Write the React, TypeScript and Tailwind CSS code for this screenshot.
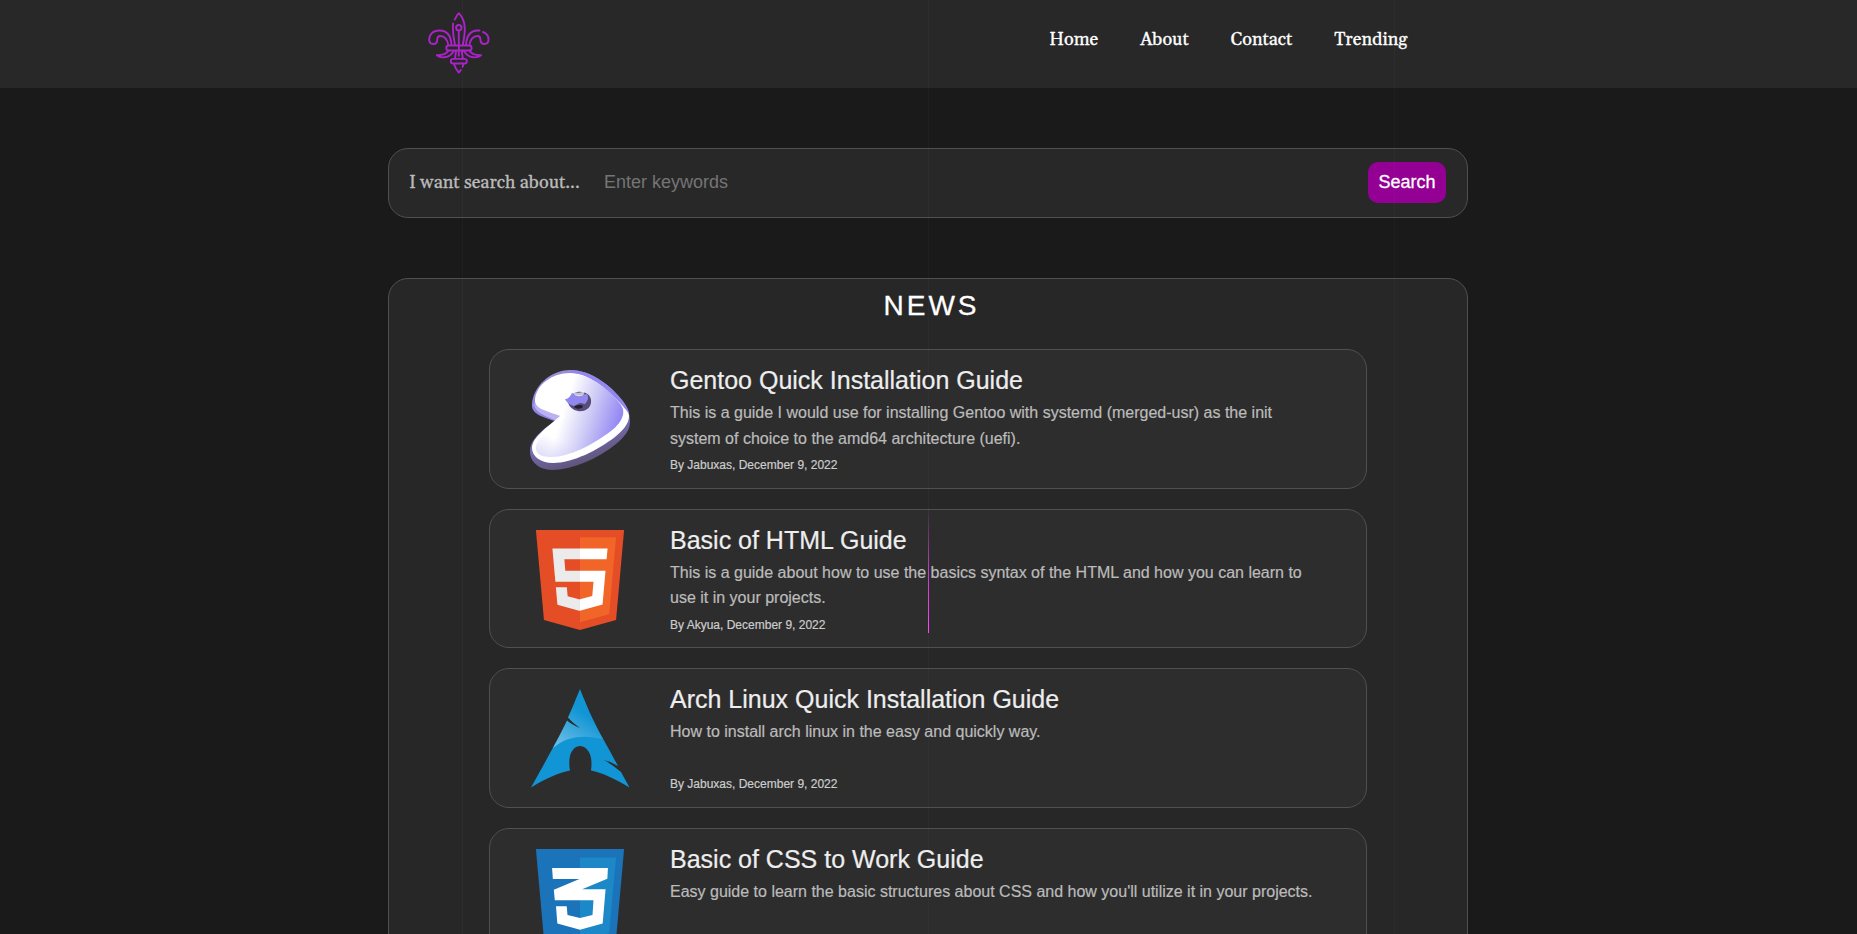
import React from "react";

function Logo() {
  return (
    <svg width="62" height="62" viewBox="0 0 62 62" fill="none" stroke="#ab22c8" strokeWidth="1.9" strokeLinecap="round" strokeLinejoin="round">
      <path d="M26.800 7.500C27.800 5 29 3 30.800 1.200 34.500 5 36.800 11 36.800 17c0 6-1 11-2 16M25 11.500C24.500 18 25.500 26 27 33M30.800 18.800v25" />
      <circle cx="30.800" cy="15.700" r="2.700" />
      <path d="M23.500 33C23 24 19 18.500 11.500 18.500 5 18.500 1.200 22.500 1.200 27.500c0 3 1.500 4.500 4 4.500s4-1.500 4-4c0-2.500 1-4 3-4 4.500 0 7.500 4 8 9M38 33C38.500 24 42.500 18.500 50 18.500h1.500M55 20c4 1.500 5.500 4 5.500 7.500 0 3-1.500 4.500-4 4.500s-4-1.500-4-4c0-2.500-1-4-3-4-4.500 0-7.500 4-8 9" />
      <rect x="18.300" y="33.500" width="25.300" height="5" rx="2.500" />
      <path d="M20.500 38.500C18.500 42 14 43.300 8.800 43.200 12 46 21 47.500 26 38.800M41.300 38.500C43.300 42 48 43.300 53 43.200 49.800 46 40.800 47.500 35.800 38.800M28 39.500l-1 7M33.800 39.500l1 7" />
      <rect x="22.800" y="46.900" width="16" height="4.600" rx="2.300" />
      <path d="M26 52C27 55.500 28.800 58.500 30.800 60.600l2-2.600M34.600 54.800l.9-2.600" />
    </svg>
  );
}

function GentooIcon() {
  return (
    <svg width="100" height="100" viewBox="0 0 100 100">
      <defs>
        <linearGradient id="gFace" x1="25" y1="35" x2="88" y2="55" gradientUnits="userSpaceOnUse">
          <stop offset="0.15" stopColor="#fff" />
          <stop offset="0.55" stopColor="#cdcaf5" />
          <stop offset="1" stopColor="#9488f4" />
        </linearGradient>
        <linearGradient id="gLow" x1="38" y1="62" x2="22" y2="96" gradientUnits="userSpaceOnUse">
          <stop offset="0.3" stopColor="#c9c5f2" stopOpacity="0" />
          <stop offset="1" stopColor="#c9c5f2" stopOpacity="0.7" />
        </linearGradient>
        <linearGradient id="gSide" x1="0" y1="0" x2="30" y2="100" gradientUnits="userSpaceOnUse">
          <stop offset="0" stopColor="#9c92cf" />
          <stop offset="0.4" stopColor="#9084ea" />
          <stop offset="1" stopColor="#61567f" />
        </linearGradient>
      </defs>
      <path fill="url(#gSide)" d="M2 34C3 17 20 0 40 0c22 0 42 17 52 30 6 8 8 14 8 22 0 9-6 15-14 22-17 14-44 26-64 26C7 100-1 90 0 80c1-12 14-21 25-29C13 47 1 44 2 34Z" />
      <path fill="#b9b1f2" d="M4 33C6 37 20 42 31 46L27 51C15 46 4 42 4 33Z" />
      <path fill="#fff" d="M5 30C6 15 22 3 40 3c21 0 39 15 49 27 6 7 10 11 10 16 0 8-6 14-14 21-17 13-42 26-62 26C10 93 2 86 2 78c0-11 17-22 28-32C18 41 4 39 5 30Z" />
      <path fill="#9187ed" d="M40 0c22 0 42 17 52 30 4 5 7 10 7 14C93 35 82 24 70 15 60 8 51 3 40 2.500Z" />
      <path fill="url(#gFace)" d="M9 28C11 14 24 4 40 4c20 0 37 14 47 26 6 7 7 10 6 15-2 7-6 11-12 16-17 13-41 26-60 26-11 0-16-4-15-10 1-10 19-21 30-31C24 41 7 37 9 28Z" />
      <path fill="url(#gLow)" d="M36 46 81 61C64 74 40 87 21 87 10 87 5 83 6 77 7 67 25 56 36 46Z" />
      <path fill="#574d7b" d="M38 32c1-6 6-11 13-10 7 0 11 5 10 11-1 6-7 9-13 8-5-1-9-4-10-9Z" />
      <path fill="#9187ed" d="M35 29c3 0 5-2 7-6 5 3 8 2 15 1 2 3 1 7-2 10l-5-1-6 3c-4-1-8-4-9-7Z" />
      <path fill="#fff" opacity="0.65" d="M42 20c4 4 9 3 12 1 1 3-1 5-4 5-4 1-7-2-8-6Z" />
      <path fill="#231e2e" d="M44 37c1-2 7-3 9-1 0 3-6 4-9 1Z" />
    </svg>
  );
}

function HtmlIcon() {
  return (
    <svg width="100" height="100" viewBox="0 0 512 512">
      <path fill="#E44D26" d="M30.200 0H481.800L440.600 460.700 255.700 512 71.400 460.800Z" />
      <path fill="#F16529" d="M256 472.600 405.500 431.300 440.700 37.700H256Z" />
      <path fill="#EBEBEB" d="M256 208.600H181L175.900 150.300H256V94.200H114.600L116 109.200 129.900 264.800H256ZM256 355.600 192.700 338.600 188.700 293.400H132.400L140.400 382.500 255.700 414.500Z" />
      <path fill="#fff" d="M255.800 208.600V264.800H325.200L318.700 337.900 255.800 355V413.500L371.500 381.500 386.600 208.600ZM255.800 94.200V150.300H392.100L397.200 94.200Z" />
    </svg>
  );
}

function ArchIcon() {
  return (
    <svg width="100" height="100" viewBox="0 0 100 100">
      <defs>
        <linearGradient id="aLight" x1="60" y1="15" x2="30" y2="60" gradientUnits="userSpaceOnUse">
          <stop offset="0.200" stopColor="#fff" stopOpacity="0" />
          <stop offset="1" stopColor="#fff" stopOpacity="0.400" />
        </linearGradient>
      </defs>
      <path fill="#1195d5" d="M50 0C45.500 11 42.800 18 38 28.500 41 31.700 45 35.500 50 39 44 36.600 40 34.100 37 31.500 31 44 21.500 62 1 98.500 17 89 29 83.500 40 81.500 39 76 39 71 40 67 41.500 61 45.500 57 50 57S59 61 60.500 67C62 72 61.500 77 61 81.500 72 83.500 83 89 99.500 98.500L91 83C86.500 79.500 82 75.500 74 71 80 72.600 84 74.600 88 77 70 43 65 38 50 0Z" />
      <path fill="url(#aLight)" d="M50 0C45.500 11 42.800 18 38 28.500 41 31.700 45 35.500 50 39 44 36.600 40 34.100 37 31.500 33 40 29 48 23 59 38 46 55 46 73 50 65 35 59 23 50 0Z" />
    </svg>
  );
}

function CssIcon() {
  return (
    <svg width="100" height="100" viewBox="0 0 512 512">
      <path fill="#1b73ba" d="M30.200 0H481.800L440.600 460.700 255.700 512 71.400 460.800Z" />
      <path fill="#1c88c7" d="M256 472.600 405.500 431.300 440.700 44H256Z" />
      <path fill="#fff" d="M113 97H399L396 152 267 206H387L372 382 256 414 140 382 133 293H188L192 338 256 353 320 338 325 262H127L122 209 253 153H117Z" />
    </svg>
  );
}

const articles = [
  { icon: <GentooIcon />, title: "Gentoo Quick Installation Guide", text: "This is a guide I would use for installing Gentoo with systemd (merged-usr) as the init system of choice to the amd64 architecture (uefi).", by: "By Jabuxas, December 9, 2022" },
  { icon: <HtmlIcon />, title: "Basic of HTML Guide", text: "This is a guide about how to use the basics syntax of the HTML and how you can learn to use it in your projects.", by: "By Akyua, December 9, 2022" },
  { icon: <ArchIcon />, title: "Arch Linux Quick Installation Guide", text: "How to install arch linux in the easy and quickly way.", by: "By Jabuxas, December 9, 2022" },
  { icon: <CssIcon />, title: "Basic of CSS to Work Guide", text: "Easy guide to learn the basic structures about CSS and how you'll utilize it in your projects." },
];

export default function App() {
  return (
    <div className="relative h-[934px] overflow-hidden bg-[#1a1a1a] font-['Liberation_Sans',Arial,sans-serif]">
      <header className="h-[88px] bg-[#282828]">
        <div className="mx-auto flex w-[1080px] justify-between pl-[39px] pr-[61px] pt-3">
          <Logo />
          <nav className="flex gap-[42px] pt-[16px] font-[Gelasio,Georgia,'Liberation_Serif',serif] text-[18px] leading-6 text-white [-webkit-text-stroke:0.3px_white]">
            <a>Home</a>
            <a>About</a>
            <a>Contact</a>
            <a>Trending</a>
          </nav>
        </div>
      </header>

      <main className="ml-[388px] w-[1080px]">
        <form className="mt-[60px] flex h-[70px] items-center rounded-[20px] border border-[#505050] bg-[#282828] pb-[2px] pl-5 pr-[21px]">
          <label className="w-[195px] font-[Gelasio,Georgia,'Liberation_Serif',serif] text-[18px] text-[#bbb] [-webkit-text-stroke:0.3px_#bbb]">I want search about...</label>
          <input className="min-w-0 flex-1 bg-transparent text-[18px] outline-none placeholder:text-[#757575]" placeholder="Enter keywords" />
          <button type="button" className="h-[41px] w-[78px] rounded-[10px] bg-[#940094] text-[18px] text-white [-webkit-text-stroke:0.3px_white]">Search</button>
        </form>

        <section className="mt-[60px] h-[900px] rounded-[20px] border border-[#505050] bg-[#272727] px-[100px]">
          <h1 className="h-[70px] pl-[7px] pt-[11px] text-center text-[28px] leading-8 tracking-[3px] text-white [-webkit-text-stroke:0.3px_white]">NEWS</h1>
          <div className="flex flex-col gap-5">
            {articles.map((a) => (
              <article key={a.title} className="flex h-[139.6px] rounded-[20px] border border-[#505050] bg-[#2d2d2d] pl-10 pr-10 pt-5">
                <div className="mr-10 h-[100px] w-[100px] shrink-0">{a.icon}</div>
                <div>
                  <h2 className="-mt-[4px] text-[25px] leading-[28px] text-[#eee] [-webkit-text-stroke:0.2px_#eee]">{a.title}</h2>
                  <p className="mt-[6px] h-[52px] text-[16px] leading-[25.6px] text-[#bbb] [-webkit-text-stroke:0.2px_#bbb]">{a.text}</p>
                  {a.by && <p className="text-[12px] leading-[26.4px] text-[#ccc] [-webkit-text-stroke:0.2px_#ccc]">{a.by}</p>}
                </div>
              </article>
            ))}
          </div>
        </section>
      </main>

      <div className="pointer-events-none absolute inset-y-0 left-[462px] w-px bg-white/[0.025]" />
      <div className="pointer-events-none absolute inset-y-0 left-[928px] w-px bg-white/[0.025]" />
      <div className="pointer-events-none absolute left-[928px] top-[506px] h-[127px] w-px bg-gradient-to-b from-transparent via-[#ee44ee]/75 to-[#ff44ff]" />
      <div className="pointer-events-none absolute inset-y-0 left-[1394px] w-px bg-white/[0.025]" />
    </div>
  );
}
